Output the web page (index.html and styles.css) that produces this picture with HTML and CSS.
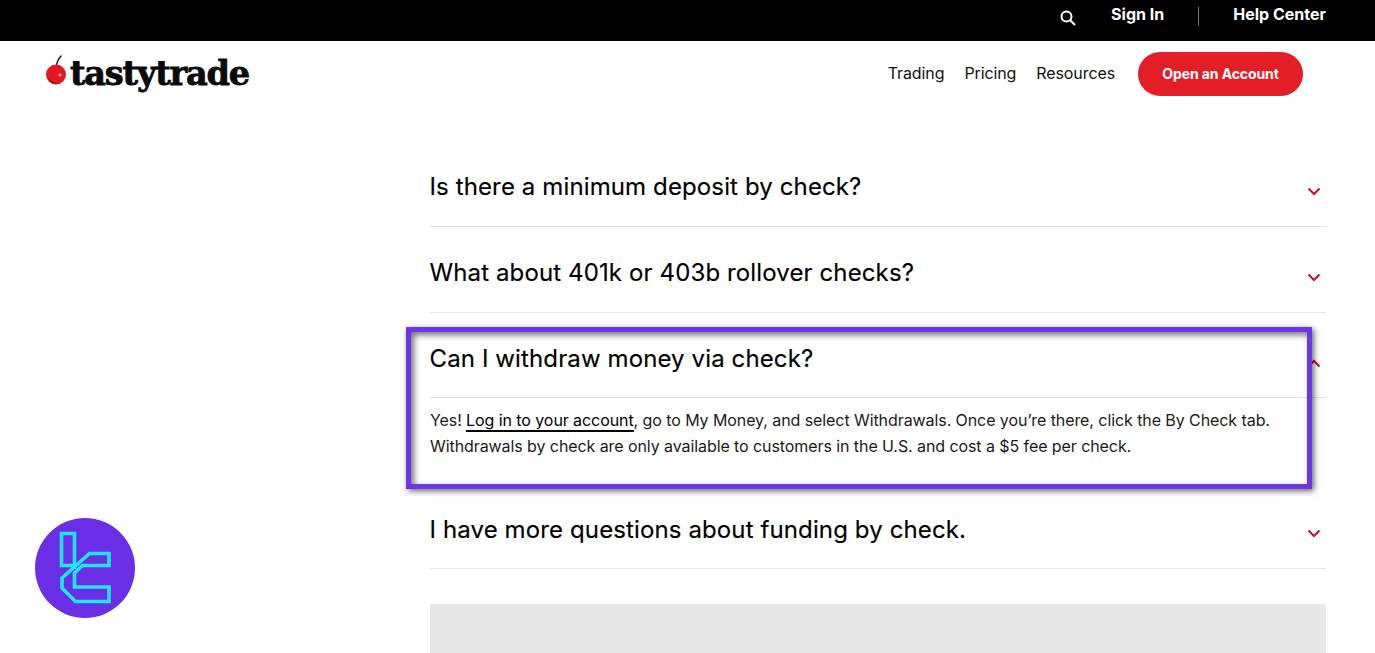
FILE: index.html
```html
<!DOCTYPE html>
<html lang="en">
<head>
    <meta charset="UTF-8">
    <meta name="viewport" content="width=device-width, initial-scale=1.0">
    <title>tastytrade - Funding by check</title>
    <link rel="stylesheet" href="styles.css">
</head>
<body>
    <div class="topbar">
        <svg class="search-icon" width="18" height="18" viewBox="0 0 18 18" fill="none" stroke="#fff" stroke-width="2">
            <circle cx="7.5" cy="7.5" r="5"/>
            <path d="M11.2 11.2 L16 16"/>
        </svg>
        <a class="top-link sign-in">Sign In</a>
        <span class="top-sep"></span>
        <a class="top-link">Help Center</a>
    </div>

    <header class="header">
        <div class="logo">
            <svg class="cherry" width="22" height="32" viewBox="0 0 22 32">
                <path d="M11 14 C11.5 9 13 5 16.500 1.500" fill="none" stroke="#111" stroke-width="1.300"/>
                <circle cx="11" cy="20.500" r="10" fill="#e3191f"/>
                <path d="M2 23 C4 28 9 30.500 14 30 C8 28.500 4 26.500 2 23 Z" fill="#7d0f12"/>
                <circle cx="15" cy="21" r="1.500" fill="#f6b9b9"/>
            </svg>
            <span class="logo-text">tastytrade</span>
        </div>
        <nav class="nav">
            <a>Trading</a>
            <a>Pricing</a>
            <a>Resources</a>
            <a class="open-btn">Open an Account</a>
        </nav>
    </header>

    <main class="faq">
        <div class="faq-row">
            <h3>Is there a minimum deposit by check?</h3>
            <svg class="chev" width="14" height="9" viewBox="0 0 14 9"><path d="M1.500 1.500 L7 7 L12.500 1.500"/></svg>
        </div>
        <div class="faq-row">
            <h3>What about 401k or 403b rollover checks?</h3>
            <svg class="chev" width="14" height="9" viewBox="0 0 14 9"><path d="M1.500 1.500 L7 7 L12.500 1.500"/></svg>
        </div>
        <div class="faq-row open">
            <h3>Can I withdraw money via check?</h3>
            <svg class="chev" width="14" height="9" viewBox="0 0 14 9"><path d="M1.500 7.500 L7 2 L12.500 7.500"/></svg>
        </div>
        <div class="faq-answer">
            <p>Yes! <a>Log in to your account</a>, go to My Money, and select Withdrawals. Once you’re there, click the By Check tab. Withdrawals by check are only available to customers in the U.S. and cost a $5 fee per check.</p>
        </div>
        <div class="faq-row">
            <h3 class="last-q">I have more questions about funding by check.</h3>
            <svg class="chev" width="14" height="9" viewBox="0 0 14 9"><path d="M1.500 1.500 L7 7 L12.500 1.500"/></svg>
        </div>
        <div class="gray-block"></div>
    </main>

    <div class="highlight"></div>

    <div class="badge">
        <svg width="100" height="100" viewBox="0 0 100 100" fill="none" stroke="#1fe6fb" stroke-width="3.600">
            <path d="M39.500 51 V15.500 H26.500 V47.500 H38"/>
            <path d="M74 35.500 H54.500 L27 60 V70 L40.500 83.500 H74 V69 H39.500 V55 L47.500 47.500 H74 Z"/>
        </svg>
    </div>
</body>
</html>
```

FILE: styles.css
```css
body {
    margin: 0;
    height: 653px;
    overflow: hidden;
    position: relative;
    background: #fff;
    color: #111;
    font-family: Inter, "Liberation Sans", sans-serif;
}
a {
    color: inherit;
    text-decoration: none;
}

.topbar {
    height: 41px;
    background: #000;
    color: #fff;
    display: flex;
    align-items: center;
    justify-content: flex-end;
    padding: 0 49px 13px 0;
    box-sizing: border-box;
}
.search-icon {
    margin-right: 34px;
    margin-top: 7px;
}
.top-link {
    font-size: 16px;
    font-weight: 700;
    line-height: 20px;
}
.top-sep {
    width: 1px;
    height: 19px;
    background: #777;
    margin: 0 34px;
    margin-top: 4px;
}

.header {
    display: flex;
    align-items: flex-start;
    justify-content: space-between;
    height: 100px;
    padding: 0 72px 0 45px;
}
.logo {
    display: flex;
    align-items: flex-start;
    margin-top: 13px;
}
.cherry {
    margin-right: 3px;
}
.logo-text {
    font-family: "DejaVu Serif", "Liberation Serif", serif;
    font-weight: 700;
    font-size: 33.600px;
    line-height: 38px;
    letter-spacing: -1.200px;
    color: #0b0b0b;
    -webkit-text-stroke: 0.800px #0b0b0b;
}
.nav {
    display: flex;
    align-items: center;
    gap: 20px;
    margin-top: 9px;
    font-size: 16px;
    letter-spacing: -0.100px;
}
.open-btn {
    margin-left: 3px;
    margin-top: 2px;
    width: 165px;
    height: 44px;
    padding-bottom: 2px;
    box-sizing: border-box;
    border-radius: 22px;
    background: #e31e27;
    color: #fff;
    font-size: 14px;
    font-weight: 700;
    display: flex;
    align-items: center;
    justify-content: center;
}

.faq {
    margin-left: 430px;
    width: 896px;
}
.faq-row {
    height: 86px;
    padding: 6px 5px 0 0;
    border-bottom: 1px solid #e4e4e4;
    box-sizing: border-box;
    display: flex;
    align-items: center;
    justify-content: space-between;
}
.faq-row.open {
    height: 85px;
}
.faq-row h3 {
    margin: 0 0 0 -0.500px;
    font-size: 24px;
    font-weight: 400;
    letter-spacing: 0.120px;
    color: #000;
    -webkit-text-stroke: 0.150px #000;
}
.faq-row .last-q {
    padding-top: 2px;
}
.chev {
    margin-top: 10px;
}
.chev path {
    fill: none;
    stroke: #c8102e;
    stroke-width: 2;
}
.faq-answer {
    height: 85px;
    padding-top: 9px;
    box-sizing: border-box;
}
.faq-answer p {
    margin: 0;
    font-size: 16px;
    line-height: 26px;
    letter-spacing: -0.080px;
    color: #1a1a1a;
}
.faq-answer a {
    color: #000;
    border-bottom: 2px solid #000;
}
.gray-block {
    height: 60px;
    margin-top: 35px;
    background: #e8e8e8;
}

/* purple marker drawn over the screenshot */
.highlight {
    position: absolute;
    left: 406px;
    top: 327px;
    width: 896px;
    height: 152px;
    border: 5px solid #6c35e8;
    box-shadow: 2px 2px 6px rgba(0, 0, 0, 0.6), inset 3px 3px 6px rgba(0, 0, 0, 0.55);
}
.badge {
    position: absolute;
    left: 35px;
    top: 518px;
    width: 100px;
    height: 100px;
    border-radius: 50%;
    background: #6a2ee6;
}
.badge svg {
    display: block;
}
```
